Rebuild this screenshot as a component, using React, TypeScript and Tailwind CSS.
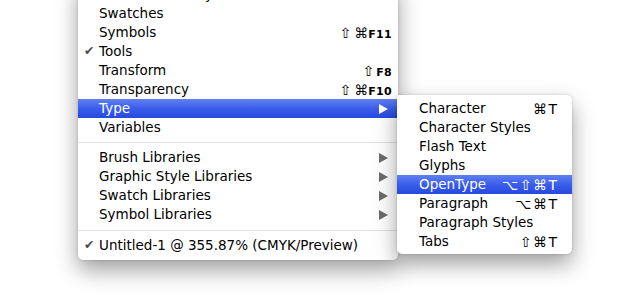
import React from "react";

type Item =
  | { kind: "item"; label: string; check?: boolean; shortcut?: React.ReactNode; arrow?: boolean; active?: boolean }
  | { kind: "sep"; h: string };

const Arrow = ({ active }: { active?: boolean }) => (
  <svg width="9" height="10" viewBox="0 0 9 10" className="shrink-0">
    <polygon points="0,0 9,5 0,10" fill={active ? "#ffffff" : "#6b6b6b"} />
  </svg>
);

const Fkey = ({ k }: { k: string }) => (
  <span className="text-[11px] font-bold tracking-[0.3px]">{k}</span>
);

const mainItems: Item[] = [
  { kind: "item", label: "SVG Interactivity" },
  { kind: "item", label: "Swatches" },
  { kind: "item", label: "Symbols", shortcut: <><span className="mr-[3px]">⇧</span>⌘<Fkey k="F11" /></> },
  { kind: "item", label: "Tools", check: true },
  { kind: "item", label: "Transform", shortcut: <><span className="mr-[2px]">⇧</span><Fkey k="F8" /></> },
  { kind: "item", label: "Transparency", shortcut: <><span className="mr-[3px]">⇧</span>⌘<Fkey k="F10" /></> },
  { kind: "item", label: "Type", arrow: true, active: true },
  { kind: "item", label: "Variables" },
  { kind: "sep", h: "h-[11px]" },
  { kind: "item", label: "Brush Libraries", arrow: true },
  { kind: "item", label: "Graphic Style Libraries", arrow: true },
  { kind: "item", label: "Swatch Libraries", arrow: true },
  { kind: "item", label: "Symbol Libraries", arrow: true },
  { kind: "sep", h: "h-[12px]" },
  { kind: "item", label: "Untitled-1 @ 355.87% (CMYK/Preview)", check: true },
];

const subItems: { label: string; shortcut?: string; active?: boolean }[] = [
  { label: "Character", shortcut: "⌘T" },
  { label: "Character Styles" },
  { label: "Flash Text" },
  { label: "Glyphs" },
  { label: "OpenType", shortcut: "⌥⇧⌘T", active: true },
  { label: "Paragraph", shortcut: "⌥⌘T" },
  { label: "Paragraph Styles" },
  { label: "Tabs", shortcut: "⇧⌘T" },
];

const activeBg = "bg-[linear-gradient(to_bottom,#5f80f2_0%,#3a5eea_50%,#2649de_100%)] text-white";

export default function App() {
  return (
    <div
      className="relative w-[640px] h-[300px] bg-white overflow-hidden text-[13.5px] text-black"
      style={{ fontFamily: '"DejaVu Sans", "Lucida Grande", sans-serif' }}
    >
      <div className="ml-[78px] mt-[-19px] w-[320px] pt-[4px] pb-[5px] bg-white rounded-b-[5px] shadow-[0_10px_22px_rgba(0,0,0,0.38),0_0_3px_rgba(0,0,0,0.18)]">
        {mainItems.map((it, i) =>
          it.kind === "sep" ? (
            <div key={i} className={`${it.h} flex items-center`}>
              <div className="w-full h-px bg-[#e1e1e1]" />
            </div>
          ) : (
            <div
              key={i}
              className={`h-[19px] flex items-center pl-[21px] pr-[6px] leading-none ${it.active ? activeBg : ""}`}
            >
              <span className="relative flex-1 whitespace-nowrap">
                {it.check && (
                  <span className="absolute left-[-15px] top-[0px] text-[12.5px] text-[#4a4a4a]">✔</span>
                )}
                {it.label}
              </span>
              {it.shortcut && <span className="whitespace-nowrap text-[14px]">{it.shortcut}</span>}
              {it.arrow && (
                <span className="mr-[4px]">
                  <Arrow active={it.active} />
                </span>
              )}
            </div>
          )
        )}
      </div>

      <div className="absolute left-[397px] top-[95px] w-[175px] pt-[4px] pb-[3px] bg-white rounded-[5px] rounded-tl-[2px] shadow-[0_10px_22px_rgba(0,0,0,0.38),0_0_3px_rgba(0,0,0,0.18)]">
        {subItems.map((it, i) => (
          <div
            key={i}
            className={`h-[19px] flex items-center pl-[22px] pr-[15px] leading-none ${it.active ? activeBg : ""}`}
          >
            <span className="flex-1 whitespace-nowrap">{it.label}</span>
            {it.shortcut && <span className="whitespace-nowrap text-[14px] tracking-[1.5px] mr-[-1.5px]">{it.shortcut}</span>}
          </div>
        ))}
      </div>
    </div>
  );
}
